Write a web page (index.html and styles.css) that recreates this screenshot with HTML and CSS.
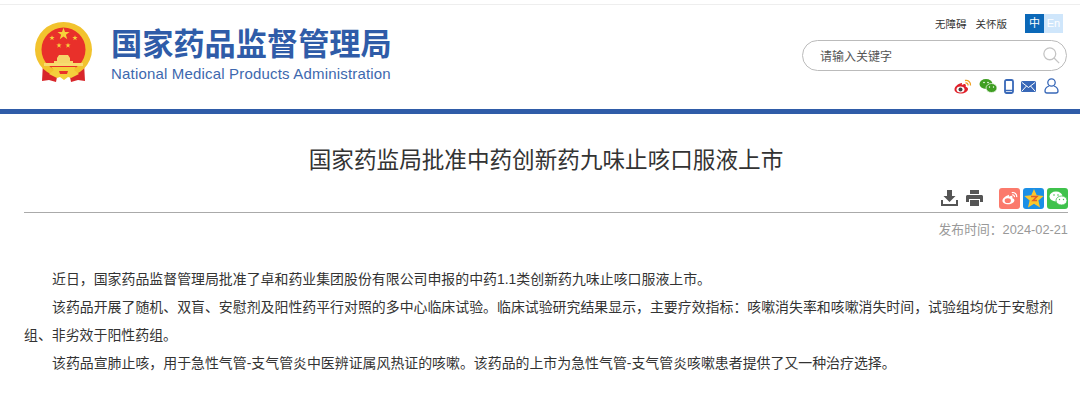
FILE: index.html
```html
<!DOCTYPE html>
<html lang="zh-CN">
<head>
    <meta charset="UTF-8">
    <title>国家药监局批准中药创新药九味止咳口服液上市</title>
    <link rel="stylesheet" href="styles.css">
</head>
<body>
    <header class="header">
        <div class="brand">
            <svg class="emblem" width="58" height="62" viewBox="0 0 58 62">
                <defs>
                    <path id="star" d="M0-5l1.200 3.400h3.600l-2.900 2.200 1.100 3.500-3-2.100-3 2.100 1.100-3.500-2.900-2.200h3.600z" fill="#f6d23a"/>
                </defs>
                <path d="M8 42L7 60l7-1 7 2 2-10z" fill="#d8262a"/>
                <path d="M49 42l1 18-7-1-7 2-2-10z" fill="#d8262a"/>
                <ellipse cx="28.500" cy="28.500" rx="28.500" ry="27.500" fill="#f2c32e"/>
                <circle cx="28.500" cy="28.500" r="22" fill="#e9302a"/>
                <use href="#star" transform="translate(28.500 13) scale(1.250)"/>
                <use href="#star" transform="translate(17 17) scale(.55)"/>
                <use href="#star" transform="translate(40 17) scale(.55)"/>
                <use href="#star" transform="translate(24 24.500) scale(.55)"/>
                <use href="#star" transform="translate(33 24.500) scale(.55)"/>
                <path d="M22 37l2-3h9l2 3v3h3v2H19v-2h3z" fill="#f6d66a"/>
                <path d="M9 42h39v3H9z" fill="#f8dc70"/>
                <path d="M16 46h25l-2 3 5 4-8 4-3-1-4 3-4-3-3 1-8-4 5-4z" fill="#f4cf3c"/>
                <path d="M24 50h9l-1 3h-7z" fill="#e9302a"/>
            </svg>
            <div class="brand-text">
                <div class="brand-cn">国家药品监督管理局</div>
                <div class="brand-en">National Medical Products Administration</div>
            </div>
        </div>
        <div class="tools">
            <div class="tool-links">
                <a>无障碍</a>
                <a>关怀版</a>
                <div class="lang">
                    <span class="lang-cn">中</span>
                    <span class="lang-en">En</span>
                </div>
            </div>
            <div class="search">
                <span>请输入关键字</span>
                <svg width="17" height="17" viewBox="0 0 20 20" fill="none" stroke="#c4c4c4" stroke-width="1.500">
                    <circle cx="8" cy="8" r="7"/>
                    <path d="M13 13L19 19"/>
                </svg>
            </div>
            <div class="social">
                <svg width="18" height="15" viewBox="0 0 18 15">
                    <path d="M7.500 4C3.500 5 .5 8 .5 10.500c0 2.500 3 4 6.500 4s7-2 7-4.500c0-1.500-1.500-2-2.300-2.300.5-1.500 0-3-2-2.500-1 .3-2 .7-2 .7s.8-2.200-.2-1.900z" fill="#e0202a"/>
                    <ellipse cx="6.500" cy="10.500" rx="4" ry="3" fill="#fff"/>
                    <circle cx="6.500" cy="10.500" r="2" fill="#444"/>
                    <path d="M11 1.500c3-.8 6 1.500 5.500 5M11.500 4c1.500-.3 2.800.8 2.500 2.500" fill="none" stroke="#f0a020" stroke-width="1.300"/>
                </svg>
                <svg width="18" height="14" viewBox="0 0 18 14">
                    <ellipse cx="7" cy="5" rx="6.500" ry="5" fill="#3f9e22"/>
                    <ellipse cx="12.500" cy="9" rx="5.500" ry="4.500" fill="#3f9e22" stroke="#fff" stroke-width=".7"/>
                    <circle cx="5" cy="3.500" r=".8" fill="#fff"/>
                    <circle cx="9" cy="3.500" r=".8" fill="#fff"/>
                    <circle cx="10.500" cy="8" r=".7" fill="#fff"/>
                    <circle cx="14.500" cy="8" r=".7" fill="#fff"/>
                </svg>
                <svg width="10" height="15" viewBox="0 0 10 15">
                    <rect x="1" y="1" width="8" height="13" rx="1.500" fill="none" stroke="#3868b8" stroke-width="1.800"/>
                    <path d="M1 11.500h8" stroke="#3868b8" stroke-width="1.500"/>
                </svg>
                <svg width="15" height="11" viewBox="0 0 15 11">
                    <rect width="15" height="11" rx="1.500" fill="#3868b8"/>
                    <path d="M1 1.500l6.500 5 6.500-5M1 10l4.500-5M14 10L9.500 5" fill="none" stroke="#fff" stroke-width="1"/>
                </svg>
                <svg class="user" width="15" height="16" viewBox="0 0 15 16" fill="none" stroke="#3868b8" stroke-width="1.300">
                    <circle cx="7.500" cy="4.500" r="3.700"/>
                    <path d="M5 8C2.500 9 1 10.500 1 13c0 1.500 1 2 2 2h9c1 0 2-.5 2-2 0-2.500-1.500-4-4-5"/>
                </svg>
            </div>
        </div>
    </header>

    <main class="article">
        <h1 class="title">国家药监局批准中药创新药九味止咳口服液上市</h1>
        <div class="share">
            <svg width="17" height="16" viewBox="0 0 17 16" fill="#555">
                <path d="M6 0h5v6h3.500L8.500 12 2.500 6H6z"/>
                <path d="M0 10h2v4h13v-4h2v6H0z"/>
            </svg>
            <svg class="print" width="17" height="16" viewBox="0 0 17 16" fill="#555">
                <path d="M4 0h9v4H4z"/>
                <path d="M1.500 5h14c.8 0 1.500.7 1.500 1.500V12h-3V9H3v3H0V6.500C0 5.700.7 5 1.500 5z"/>
                <path d="M4 10h9v6H4z"/>
            </svg>
            <span class="share-btn weibo">
                <svg width="16" height="14" viewBox="0 0 18 15">
                    <path d="M7.500 4C3.500 5 .5 8 .5 10.500c0 2.500 3 4 6.500 4s7-2 7-4.500c0-1.500-1.500-2-2.300-2.300.5-1.500 0-3-2-2.500-1 .3-2 .7-2 .7s.8-2.200-.2-1.900z" fill="#fff"/>
                    <ellipse cx="6.500" cy="10.500" rx="3.500" ry="2.700" fill="#fb7a6c"/>
                    <path d="M11 1.500c3-.8 6 1.500 5.500 5M11.500 4c1.500-.3 2.800.8 2.500 2.500" fill="none" stroke="#fff" stroke-width="1.300"/>
                </svg>
            </span>
            <span class="share-btn qzone">
                <svg width="20" height="19" viewBox="0 0 20 19">
                    <path d="M10 0l2.700 6.300 7 .6-5.300 4.600 1.600 6.900-6-3.600-6 3.600 1.600-6.900L.3 6.900l7-.6z" fill="#fbc62c"/>
                    <path d="M7 7.500h6l-4 4h4" fill="none" stroke="#e0602a" stroke-width="1.500"/>
                </svg>
            </span>
            <span class="share-btn wechat">
                <svg width="18" height="15" viewBox="0 0 18 15">
                    <ellipse cx="7" cy="5.500" rx="6.500" ry="5" fill="#fff"/>
                    <ellipse cx="12.500" cy="9.500" rx="5.500" ry="4.500" fill="#fff" stroke="#3fc24c" stroke-width=".8"/>
                    <circle cx="5" cy="4" r=".8" fill="#3fc24c"/>
                    <circle cx="9" cy="4" r=".8" fill="#3fc24c"/>
                    <circle cx="10.500" cy="8.500" r=".7" fill="#3fc24c"/>
                    <circle cx="14.500" cy="8.500" r=".7" fill="#3fc24c"/>
                </svg>
            </span>
        </div>
        <div class="date">发布时间：2024-02-21</div>
        <div class="content">
            <p>近日，国家药品监督管理局批准了卓和药业集团股份有限公司申报的中药1.1类创新药九味止咳口服液上市。</p>
            <p>该药品开展了随机、双盲、安慰剂及阳性药平行对照的多中心临床试验。临床试验研究结果显示，主要疗效指标：咳嗽消失率和咳嗽消失时间，试验组均优于安慰剂组、非劣效于阳性药组。</p>
            <p>该药品宣肺止咳，用于急性气管-支气管炎中医辨证属风热证的咳嗽。该药品的上市为急性气管-支气管炎咳嗽患者提供了又一种治疗选择。</p>
        </div>
    </main>
</body>
</html>
```

FILE: styles.css
```css
* {
    margin: 0;
    padding: 0;
    box-sizing: border-box;
}

body {
    background: #fff;
    font-family: "Liberation Sans", "Noto Sans CJK SC", sans-serif;
    color: #333;
    overflow: hidden;
}

.header {
    height: 110px;
    margin-top: 4px;
    padding: 9px 13px 0 35px;
    border-top: 1px solid #eee;
    border-bottom: 5px solid #2f5ca8;
    display: flex;
    justify-content: space-between;
}

.brand {
    display: flex;
    align-items: flex-start;
    gap: 18px;
    padding-top: 7px;
}

.brand-text {
    padding-top: 4px;
}

.brand-cn {
    font-size: 31.2px;
    line-height: 40px;
    font-weight: bold;
    color: #2f5ca8;
}

.brand-en {
    font-size: 15px;
    line-height: 18px;
    letter-spacing: 0.18px;
    color: #3d68ae;
}

.tools {
    width: 265px;
    display: flex;
    flex-direction: column;
    align-items: flex-end;
}

.tool-links {
    display: flex;
    align-items: center;
    font-size: 10.5px;
    color: #333;
    gap: 9px;
    padding-right: 4px;
}

.lang {
    display: flex;
    margin-left: 9px;
    font-size: 11px;
    line-height: 19px;
    text-align: center;
    color: #fff;
}

.lang-cn {
    width: 19px;
    background: #0b68b8;
}

.lang-en {
    width: 19px;
    background: #cfe6fb;
}

.search {
    width: 265px;
    height: 31px;
    margin-top: 7px;
    padding: 0 6px 0 17px;
    border: 1px solid #bbb;
    border-radius: 16px;
    display: flex;
    align-items: center;
    justify-content: space-between;
    font-size: 12px;
    color: #555;
}

.social {
    display: flex;
    align-items: center;
    gap: 7px;
    margin-top: 7px;
    padding-right: 8px;
}

.user {
    margin-left: 1px;
}

.article {
    padding: 0 12px 0 24px;
}

.title {
    margin-top: 31px;
    font-size: 22.6px;
    line-height: 32px;
    font-weight: normal;
    text-align: center;
    color: #333;
}

.share {
    height: 27px;
    margin-top: 9px;
    padding-bottom: 2px;
    border-bottom: 1px solid #aaa;
    display: flex;
    align-items: center;
    justify-content: flex-end;
    gap: 3px;
}

.print {
    margin: 0 13px 0 5px;
}

.share-btn {
    width: 21px;
    height: 21px;
    border-radius: 3px;
    display: flex;
    align-items: center;
    justify-content: center;
}

.weibo {
    background: #fb7a6c;
}

.qzone {
    background: #1b8fe6;
}

.wechat {
    background: #3fc24c;
}

.date {
    margin-top: 9px;
    font-size: 12.8px;
    line-height: 16px;
    text-align: right;
    color: #999;
}

.content {
    margin-top: 27px;
    font-size: 13.92px;
    line-height: 28px;
    color: #333;
}

.content p {
    text-indent: 28px;
}
```
